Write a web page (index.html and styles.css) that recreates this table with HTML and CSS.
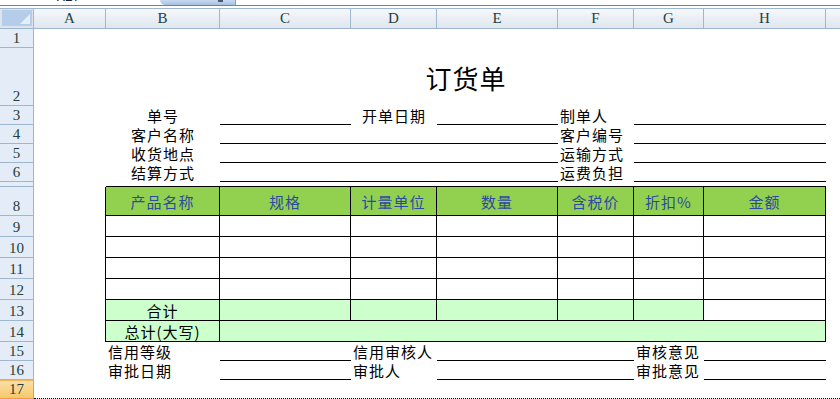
FILE: index.html
```html
<!DOCTYPE html>
<html lang="zh-CN">
<head>
<meta charset="utf-8">
<title>订货单</title>
<link rel="stylesheet" href="styles.css">
</head>
<body>
<div class="strip">
  <div class="namebox"><span>A17</span></div>
  <div class="pill"><i class="pill-mark"></i></div>
  <div class="fx"></div>
</div>
<div class="sheet">
  <div class="row hdr">
    <div class="corner"><svg width="30" height="16" viewBox="0 0 30 16"><rect x="0" y="0" width="30" height="16" fill="#b6cdea"/><polygon points="28,4 28,14 18,14" fill="#e6eef8"/></svg></div>
    <div class="ch">A</div><div class="ch">B</div><div class="ch">C</div><div class="ch">D</div><div class="ch">E</div><div class="ch">F</div><div class="ch">G</div><div class="ch">H</div><div class="ch last"></div>
  </div>

  <div class="row h19"><div class="rh">1</div></div>

  <div class="row h58"><div class="rh">2</div><div></div><div class="c title s7">订货单</div></div>

  <div class="row h19"><div class="rh">3</div><div></div>
    <div class="c ctr">单号</div><div class="c ul"></div><div class="c ctr">开单日期</div><div class="c ul"></div><div class="c lft">制单人</div><div class="c ul s2"></div></div>
  <div class="row h19"><div class="rh">4</div><div></div>
    <div class="c ctr">客户名称</div><div class="c ul s3"></div><div class="c lft">客户编号</div><div class="c ul s2"></div></div>
  <div class="row h19"><div class="rh">5</div><div></div>
    <div class="c ctr">收货地点</div><div class="c ul s3"></div><div class="c lft">运输方式</div><div class="c ul s2"></div></div>
  <div class="row h19"><div class="rh">6</div><div></div>
    <div class="c ctr">结算方式</div><div class="c ul s3"></div><div class="c lft">运费负担</div><div class="c ul s2"></div></div>

  <div class="row h5"><div class="rh"></div><div></div><div class="ttop s7"></div></div>

  <div class="row h29"><div class="rh">8</div><div class="tl"></div>
    <div class="tc th">产品名称</div><div class="tc th">规格</div><div class="tc th">计量单位</div><div class="tc th">数量</div><div class="tc th">含税价</div><div class="tc th">折扣%</div><div class="tc th">金额</div></div>
  <div class="row h21"><div class="rh">9</div><div class="tl"></div>
    <div class="tc"></div><div class="tc"></div><div class="tc"></div><div class="tc"></div><div class="tc"></div><div class="tc"></div><div class="tc"></div></div>
  <div class="row h21"><div class="rh">10</div><div class="tl"></div>
    <div class="tc"></div><div class="tc"></div><div class="tc"></div><div class="tc"></div><div class="tc"></div><div class="tc"></div><div class="tc"></div></div>
  <div class="row h21"><div class="rh">11</div><div class="tl"></div>
    <div class="tc"></div><div class="tc"></div><div class="tc"></div><div class="tc"></div><div class="tc"></div><div class="tc"></div><div class="tc"></div></div>
  <div class="row h21"><div class="rh">12</div><div class="tl"></div>
    <div class="tc"></div><div class="tc"></div><div class="tc"></div><div class="tc"></div><div class="tc"></div><div class="tc"></div><div class="tc"></div></div>
  <div class="row h21"><div class="rh">13</div><div class="tl"></div>
    <div class="tc lg txt">合计</div><div class="tc lg"></div><div class="tc lg"></div><div class="tc lg"></div><div class="tc lg"></div><div class="tc lg"></div><div class="tc"></div></div>
  <div class="row h21"><div class="rh">14</div><div class="tl"></div>
    <div class="tc lg txt">总计(大写)</div><div class="tc lg s6"></div></div>

  <div class="row h19"><div class="rh">15</div><div></div>
    <div class="c lft">信用等级</div><div class="c ul"></div><div class="c lft">信用审核人</div><div class="c ul s2"></div><div class="c lft">审核意见</div><div class="c ul"></div></div>
  <div class="row h19"><div class="rh">16</div><div></div>
    <div class="c lft">审批日期</div><div class="c ul"></div><div class="c lft">审批人</div><div class="c ul s2"></div><div class="c lft">审批意见</div><div class="c ul"></div></div>

  <div class="row h19"><div class="rh sel">17</div><div class="pb s9"></div></div>
</div>
</body>
</html>
```

FILE: styles.css
```css
* { box-sizing: border-box; }
html, body { margin: 0; padding: 0; background: #fff; }
body {
  width: 840px;
  height: 399px;
  overflow: hidden;
  font-family: "Noto Sans CJK SC", "Noto Sans", sans-serif;
  font-size: 15px;
  color: #000;
}

/* formula bar remnant */
.strip {
  height: 6px;
  display: flex;
  overflow: hidden;
  border-bottom: 1px solid #6f8299;
  margin-bottom: 2px;
}
.namebox {
  width: 160px;
  padding-left: 57px;
  font-family: "Liberation Mono", monospace;
  font-size: 13px;
  line-height: 13px;
  color: #222;
}
.namebox span { display: block; margin-top: -9px; }
.pill {
  width: 76px;
  display: flex;
  justify-content: flex-end;
  padding-right: 12px;
  background: linear-gradient(#c8daf1, #a6c0e4);
  border-radius: 0 0 0 12px;
  border-right: 1px solid #8d9fb8;
}
.pill-mark { display: block; width: 5px; height: 2px; background: #4d5a6a; }
.fx { flex: 1; }

/* sheet grid */
.sheet {
  --cols: 34px 72px 114px 131px 86px 121px 76px 70px 122px 1fr;
}
.row {
  display: grid;
  grid-template-columns: var(--cols);
}
.h19 { height: 19px; }
.h58 { height: 58px; }
.h5 { height: 5px; }
.h29 { height: 29px; }
.h21 { height: 21px; }

.s2 { grid-column: span 2; }
.s3 { grid-column: span 3; }
.s6 { grid-column: span 6; }
.s7 { grid-column: span 7; }
.s9 { grid-column: span 9; }

/* column headers */
.hdr {
  height: 21px;
  border-top: 1px solid #9eb6ce;
}
.ch, .corner {
  background: linear-gradient(#f6f8fb, #dfe6ef);
  border-right: 1px solid #9eb6ce;
  border-bottom: 1px solid #9eb6ce;
  display: flex;
  align-items: center;
  justify-content: center;
  font-family: "Liberation Serif", serif;
  font-size: 15px;
  color: #243f3e;
}
.corner {
  background: #dbe4ef;
  align-items: flex-start;
  padding-top: 1px;
}
.corner svg { display: block; }
.ch.last { border-right: none; }

/* row headers */
.rh {
  background: #e4ecf7;
  border-right: 1px solid #9eb6ce;
  border-bottom: 1px solid #9eb6ce;
  display: flex;
  align-items: flex-end;
  justify-content: center;
  font-family: "Liberation Serif", serif;
  font-size: 15px;
  line-height: 16px;
  padding-bottom: 1px;
  color: #243f3e;
  overflow: hidden;
}
.rh.sel {
  background: linear-gradient(#fbdfa6, #f7c86c);
  border-right-color: #f29b3c;
  border-bottom-color: #f29b3c;
  border-top: 1px solid #f6b45c;
}

/* cells */
.c {
  display: flex;
  align-items: flex-end;
  white-space: nowrap;
  line-height: 19px;
  letter-spacing: 1px;
  min-width: 0;
}
.ctr { justify-content: center; }
.lft { padding-left: 2px; }
.ul { border-bottom: 1px solid #000; }

.title {
  align-items: center;
  justify-content: center;
  font-size: 26px;
  line-height: 30px;
  letter-spacing: 1px;
  padding-top: 2px;
}

/* table */
.ttop { border-bottom: 1px solid #000; }
.tl { border-right: 1px solid #000; }
.tc {
  border-right: 1px solid #000;
  border-bottom: 1px solid #000;
  display: flex;
  align-items: center;
  justify-content: center;
  white-space: nowrap;
  letter-spacing: 1px;
  line-height: 19px;
}
.th {
  background: #92d050;
  color: #2b4ba0;
}
.lg { background: #ccffcc; }
.txt { align-items: flex-end; }

/* page break */
.pb { border-bottom: 1px dotted #000; }
```
